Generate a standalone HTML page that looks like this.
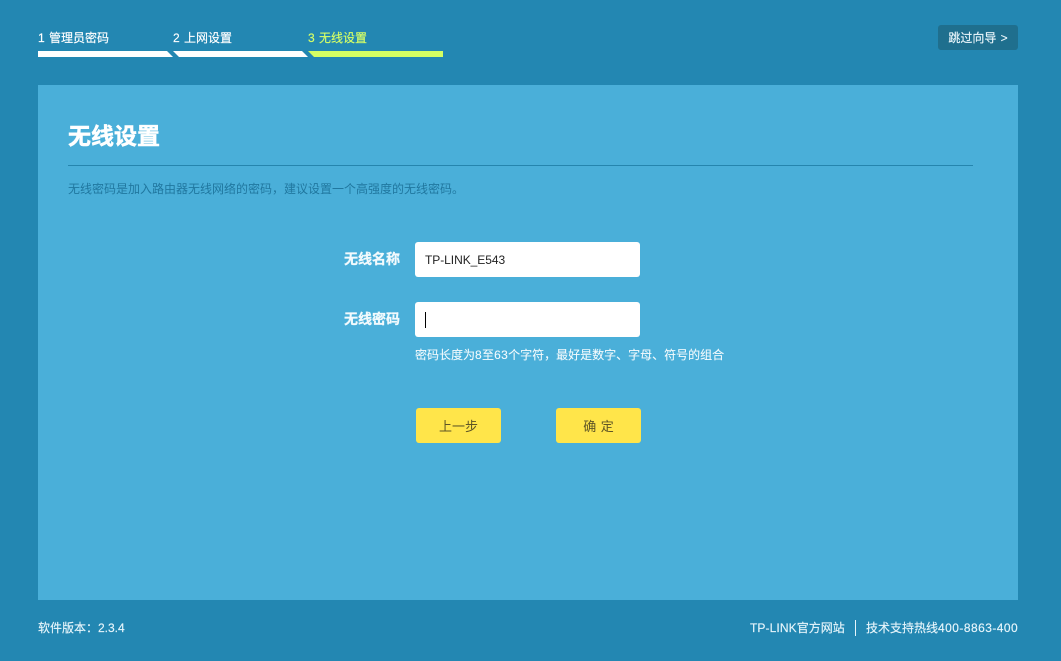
<!DOCTYPE html>
<html lang="zh-CN">
<head>
<meta charset="utf-8">
<title>无线设置</title>
<style>
*{box-sizing:border-box;margin:0;padding:0}
html,body{width:1061px;height:661px;overflow:hidden}
body{position:relative;background:#2387b2;font-family:"Liberation Sans","Noto Sans CJK SC",sans-serif;color:#fff;font-size:12px}
.a{position:absolute;white-space:nowrap}
.step{top:30px;font-size:12px;line-height:17px;color:#fff;word-spacing:1px;-webkit-text-stroke:.15px currentColor}
.skip{left:938px;top:25px;width:80px;height:25px;background:#1f6f8e;border-radius:3px;line-height:27px;text-align:center;font-size:12px;color:#eaf6fb;word-spacing:1px;-webkit-text-stroke:.15px currentColor}
.panel{left:38px;top:85px;width:980px;height:515px;background:#4aafd9}
.title{left:68px;top:121px;font-size:23px;line-height:31px;font-weight:bold;color:#fff;-webkit-text-stroke:.5px #fff}
.rule{left:68px;top:165px;width:905px;height:1px;background:#2585ae}
.desc{left:68px;top:181px;font-size:12px;line-height:17px;color:#20779f}
.lab{left:344px;width:56px;font-size:14px;line-height:20px;font-weight:bold;color:#f2fafd;-webkit-text-stroke:.3px currentColor}
.input{left:415px;width:225px;height:35px;background:#fff;border-radius:3px}
.val{left:425px;top:252px;font-size:12px;line-height:17px;color:#222;letter-spacing:-.05px}
.caret{left:425px;top:312px;width:1px;height:16px;background:#000}
.hint{left:415px;top:347px;font-size:12px;line-height:17px;color:#f2fafd;-webkit-text-stroke:.1px currentColor}
.hint i{font-style:normal;letter-spacing:.35px}
.btn{top:408px;width:85px;height:35px;background:#ffe54a;border-radius:3px;text-align:center;line-height:37px;font-size:13px;color:#5e5526}
.foot{top:620px;font-size:12px;line-height:17px;color:#e6f5fb;-webkit-text-stroke:.15px currentColor}
.foot i{font-style:normal;letter-spacing:.4px}
.sep{left:855px;top:620px;width:1px;height:16px;background:#e6f5fb}
</style>
</head>
<body>
<div class="a step" style="left:38px">1 管理员密码</div>
<div class="a step" style="left:173px">2 上网设置</div>
<div class="a step" style="left:308px;color:#d6ff66">3 无线设置</div>
<svg class="a" style="left:0;top:0" width="460" height="60" viewBox="0 0 460 60">
<polygon points="38,51 167,51 173,57 38,57" fill="#fff"/>
<polygon points="173,51 302,51 308,57 179,57" fill="#fff"/>
<polygon points="308,51 443,51 443,57 314,57" fill="#d4ff63"/>
</svg>
<div class="a skip">跳过向导 &gt;</div>
<div class="a panel"></div>
<div class="a title">无线设置</div>
<div class="a rule"></div>
<div class="a desc">无线密码是加入路由器无线网络的密码，建议设置一个高强度的无线密码。</div>
<div class="a lab" style="top:249px">无线名称</div>
<div class="a input" style="top:242px"></div>
<div class="a val">TP-LINK_E543</div>
<div class="a lab" style="top:309px">无线密码</div>
<div class="a input" style="top:302px"></div>
<div class="a caret"></div>
<div class="a hint">密码长度为<i>8</i>至<i>63</i>个字符，最好是数字、字母、符号的组合</div>
<div class="a btn" style="left:416px">上一步</div>
<div class="a btn" style="left:556px;word-spacing:1px">确 定</div>
<div class="a foot" style="left:38px">软件版本：2.3.4</div>
<div class="a foot" style="left:750px"><i style="letter-spacing:.1px">TP-LINK</i>官方网站</div>
<div class="a sep"></div>
<div class="a foot" style="left:866px">技术支持热线<i style="letter-spacing:.45px">400-8863-400</i></div>
</body>
</html>
